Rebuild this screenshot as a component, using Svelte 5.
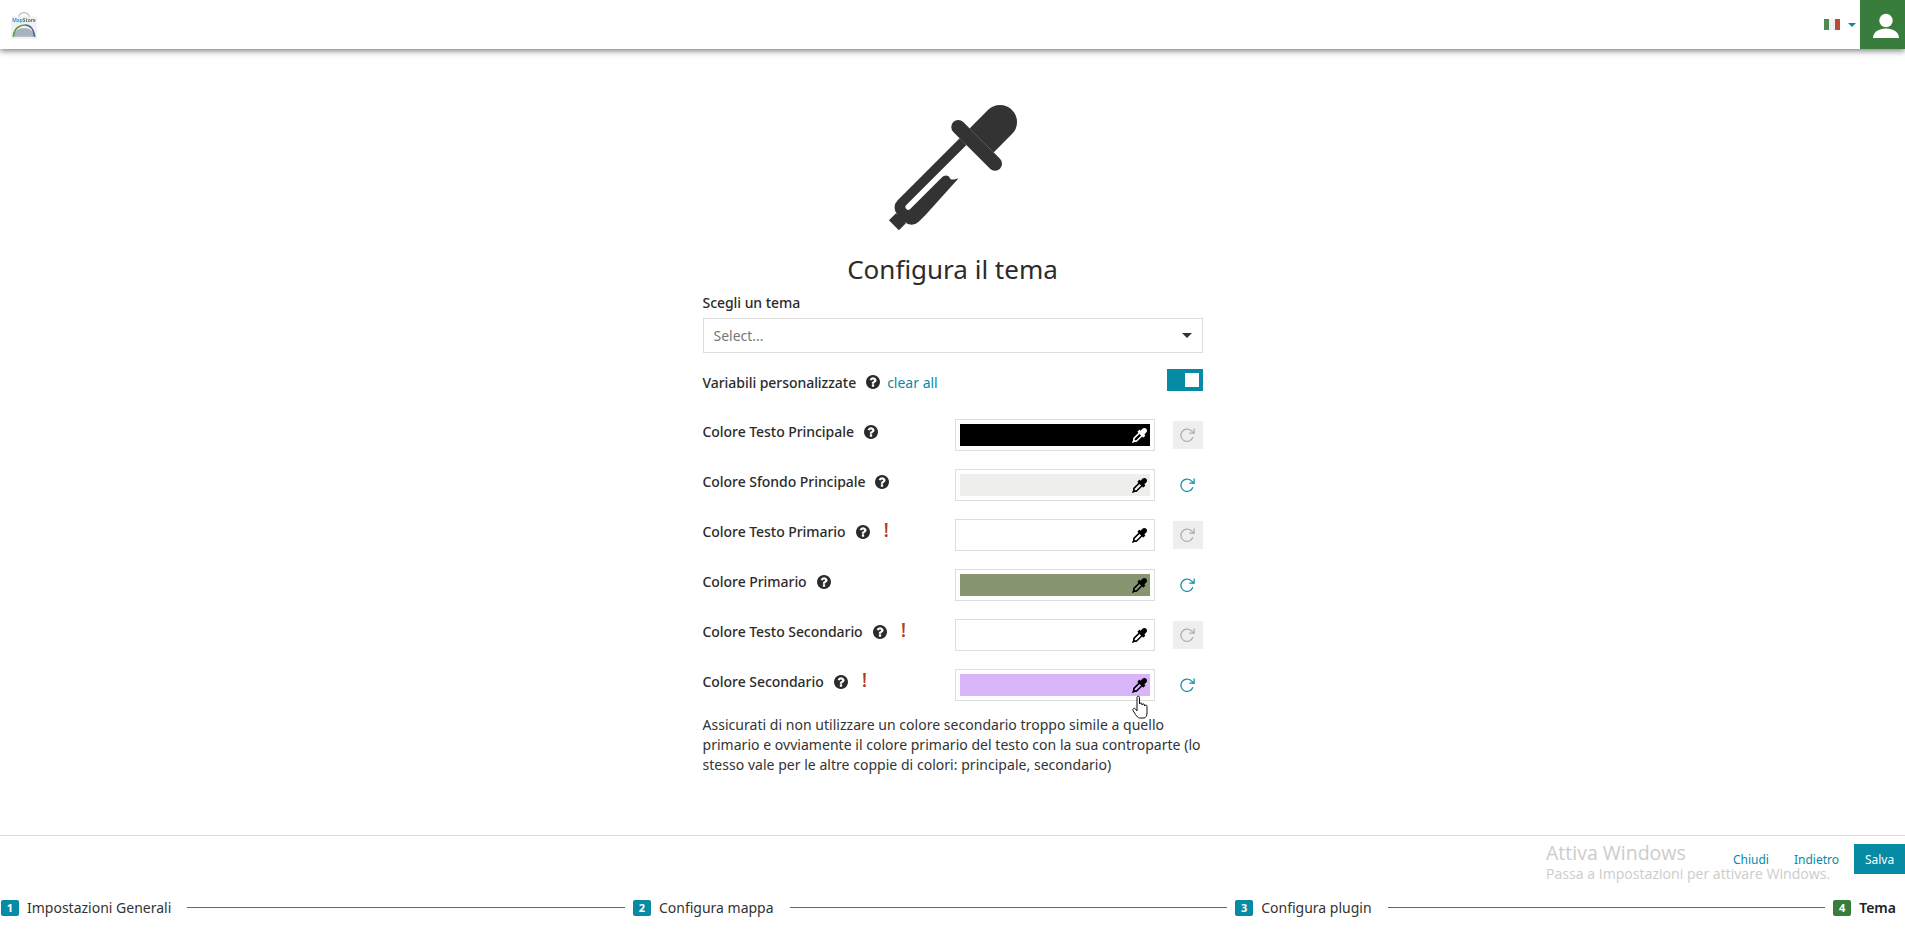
<script lang="ts">
	// Theme configuration step of the context creator wizard.
	const colorRows = [
		{ label: 'Colore Testo Principale', color: '#000000', changed: false, warn: false, light: true },
		{ label: 'Colore Sfondo Principale', color: '#eeeeec', changed: true, warn: false, light: false },
		{ label: 'Colore Testo Primario', color: '#ffffff', changed: false, warn: true, light: false },
		{ label: 'Colore Primario', color: '#879670', changed: true, warn: false, light: false },
		{ label: 'Colore Testo Secondario', color: '#ffffff', changed: false, warn: true, light: false },
		{ label: 'Colore Secondario', color: '#d8b4f8', changed: true, warn: true, light: false }
	];

	const steps = [
		{ n: 1, label: 'Impostazioni Generali', active: false },
		{ n: 2, label: 'Configura mappa', active: false },
		{ n: 3, label: 'Configura plugin', active: false },
		{ n: 4, label: 'Tema', active: true }
	];

	const helpPath = 'M1024 1376v-192q0-14-9-23t-23-9h-192q-14 0-23 9t-9 23v192q0 14 9 23t23 9h192q14 0 23-9t9-23zm256-672q0-88-55.5-163t-138.5-116-170-41q-243 0-371 213-15 24 8 42l132 100q7 6 19 6 16 0 25-12 53-68 86-92 34-24 86-24 48 0 85.5 26t37.5 59q0 38-20 61t-68 45q-63 28-115.5 86.5t-52.5 125.5v36q0 14 9 23t23 9h192q14 0 23-9t9-23q0-19 21.5-49.5t54.5-49.5q32-18 49-28.5t46-35 44.5-48 28-60.5 12.5-81zm384 192q0 209-103 385.5t-279.5 279.5-385.5 103-385.5-103-279.5-279.5-103-385.5 103-385.5 279.5-279.5 385.5-103 385.5 103 279.5 279.5 103 385.5z';
	const dropperPath = 'M1698 94q94 94 94 226.5t-94 225.5l-225 223 104 104q10 10 10 23t-10 23l-210 210q-10 10-23 10t-23-10l-105-105-603 603q-37 37-90 37h-203l-256 128-64-64 128-256v-203q0-53 37-90l603-603-105-105q-10-10-10-23t10-23l210-210q10-10 23-10t23 10l104 104 223-225q93-94 225.5-94t226.5 94zM512 1472l576-576-192-192-576 576v192h192z';
</script>

{#snippet help()}
	<svg class="help" viewBox="128 128 1536 1536" aria-hidden="true"><path d={helpPath} /></svg>
{/snippet}

<div class="page">
	<header class="topbar">
		<svg class="logo" viewBox="0 0 28 28" aria-hidden="true">
			<path d="M9 7 C9 1 19 1 19 7" fill="none" stroke="#aaa" stroke-width="1" />
			<rect x="2" y="6" width="24" height="21" fill="#f0f0f0" />
			<text x="14" y="11.5" text-anchor="middle" class="logo-text"><tspan fill="#3a9bd8">Map</tspan><tspan fill="#666">Store</tspan></text>
			<path d="M4 25 C5 14 23 14 24 25 Z" fill="#a9b2c0" />
			<path d="M4 25 C5 14 14 14 15 14" fill="none" stroke="#5c9c4a" stroke-width="1.6" />
			<path d="M15 14 C20 14 23 18 24 25" fill="none" stroke="#4d6a96" stroke-width="1.6" />
		</svg>
		<div class="topbar-right">
			<button class="lang" aria-label="Lingua">
				<span class="flag"><i class="fg"></i><i class="fw"></i><i class="fr"></i></span>
				<span class="lang-caret"></span>
			</button>
			<button class="user" aria-label="Utente">
				<svg viewBox="0 0 26 28" width="26" height="28" aria-hidden="true">
					<circle cx="13" cy="9.5" r="6.7" fill="#fff" />
					<path d="M0 27 C0 21 6 17.5 13 17.5 C20 17.5 26 21 26 27 Z" fill="#fff" />
				</svg>
			</button>
		</div>
	</header>

	<main class="content">
		<svg class="hero" viewBox="0 0 130 130" aria-hidden="true">
			<g transform="translate(124 6) rotate(45)" fill="#333">
				<path d="M-17 43 V16.7 A17 16.7 0 0 1 17 16.7 V43 Z" />
				<rect x="-33" y="43" width="66" height="14" rx="7" />
				<path d="M-17 57 H-7.5 V142 A2.7 2.7 0 0 0 -2 142 V98 C-2 92 2 91 4 92 C7 93 8 90 10.5 86 L13 135 V145 A10 10 0 0 1 3 155 H5 V165 H-9 V155 H-7 A10 10 0 0 1 -17 145 Z" />
			</g>
		</svg>
		<h1>Configura il tema</h1>

		<div class="form">
			<label class="field-label" for="theme-select">Scegli un tema</label>
			<div class="select" id="theme-select">
				<span>Select...</span>
				<span class="select-caret"></span>
			</div>

			<div class="custom-row">
				<span class="name">Variabili personalizzate</span>
				{@render help()}
				<a class="clear" href="#clear">clear all</a>
				<span class="toggle"><span class="knob"></span></span>
			</div>

			{#each colorRows as row}
				<div class="color-row">
					<div class="row-label">
						<span class="name">{row.label}</span>
						{@render help()}
						{#if row.warn}<span class="warn">!</span>{/if}
					</div>
					<div class="swatch-box">
						<div class="swatch" style="background: {row.color}">
							<svg class="picker" class:light={row.light} viewBox="0 0 1792 1792" aria-hidden="true"><path d={dropperPath} /></svg>
						</div>
					</div>
					<button class="reset" class:disabled={!row.changed} aria-label="Ripristina">
						<svg viewBox="0 0 24 24" aria-hidden="true">
							<polyline points="22 2 22 9 15 9" />
							<path d="M20.2 15a9 9 0 1 1-2.1-9.4L22 9" />
						</svg>
					</button>
				</div>
			{/each}

			<p class="note">Assicurati di non utilizzare un colore secondario troppo simile a quello primario e ovviamente il colore primario del testo con la sua controparte (lo stesso vale per le altre coppie di colori: principale, secondario)</p>
		</div>

		<svg class="cursor" viewBox="0 0 18 24" aria-hidden="true">
			<path d="M5 10 V2.5 C5 0.8 7.5 0.8 7.5 2.5 V9 C7.5 7.6 10 7.6 10 9 V10 C10 8.6 12.5 8.6 12.5 10 V11 C12.5 9.8 15 9.8 15 11.2 V18 C15 21 13.5 23 12 23 H7.5 C6 23 5 21.5 3.5 19.5 L1 15.5 C0 13.5 2.6 12.6 3.6 14 L5 15.8 Z" fill="#fff" stroke="#111" stroke-width="1" />
		</svg>
	</main>

	<footer class="footer">
		<div class="actions">
			<div class="watermark">
				<div class="wm-title">Attiva Windows</div>
				<div class="wm-sub">Passa a Impostazioni per attivare Windows.</div>
			</div>
			<button class="link-btn">Chiudi</button>
			<button class="link-btn last">Indietro</button>
			<button class="save-btn">Salva</button>
		</div>
		<nav class="stepper">
			{#each steps as step, i}
				{#if i > 0}<span class="step-line"></span>{/if}
				<div class="step" class:active={step.active}>
					<span class="badge">{step.n}</span>
					<span class="step-label">{step.label}</span>
				</div>
			{/each}
		</nav>
	</footer>
</div>

<style>
	:global(body) {
		margin: 0;
		background: #fff;
		color: #333;
		font-family: "Noto Sans", "Open Sans", sans-serif;
		font-size: 14px;
		overflow: hidden;
	}

	.page {
		display: flex;
		flex-direction: column;
		height: 932px;
	}

	button {
		font-family: inherit;
		border: none;
		background: none;
		padding: 0;
		cursor: pointer;
	}

	.topbar {
		display: flex;
		align-items: center;
		justify-content: space-between;
		height: 49px;
		flex-shrink: 0;
		box-shadow: 0 2px 6px rgba(0, 0, 0, 0.5);
		position: relative;
	}

	.logo {
		width: 30px;
		height: 30px;
		margin-left: 9px;
		filter: blur(0.5px);
	}

	.logo-text {
		font-size: 4.6px;
		font-weight: 700;
	}

	.topbar-right {
		display: flex;
		align-items: center;
		height: 100%;
	}

	.lang {
		display: flex;
		align-items: center;
		gap: 8px;
		margin-right: 4px;
	}

	.flag {
		display: flex;
		width: 16px;
		height: 11px;
	}

	.flag i {
		flex: 1;
	}

	.fg { background: #4f8a52; }
	.fw { background: #f0f0f0; }
	.fr { background: #b84a36; }

	.lang-caret {
		width: 0;
		height: 0;
		border-left: 4px solid transparent;
		border-right: 4px solid transparent;
		border-top: 4px solid #078aa3;
	}

	.user {
		display: flex;
		align-items: center;
		justify-content: center;
		width: 45px;
		height: 49px;
		padding-left: 7px;
		box-sizing: border-box;
		background: #397d3c;
	}

	.content {
		flex: 1;
		display: flex;
		flex-direction: column;
		align-items: center;
		position: relative;
	}

	.hero {
		width: 130px;
		height: 130px;
		margin-top: 55px;
	}

	h1 {
		font-size: 26px;
		font-weight: 400;
		line-height: 34px;
		margin: 18px 0 0;
		color: #2b2b2b;
	}

	.form {
		width: 500px;
		margin-top: 7px;
	}

	.field-label {
		display: block;
		font-weight: 500;
		line-height: 20px;
		margin-bottom: 5px;
		color: #2b2b2b;
		letter-spacing: -0.05px;
	}

	.select {
		display: flex;
		align-items: center;
		justify-content: space-between;
		height: 35px;
		box-sizing: border-box;
		border: 1px solid #ddd;
		padding: 0 10px;
		color: #777;
	}

	.select-caret {
		border-left: 5px solid transparent;
		border-right: 5px solid transparent;
		border-top: 5px solid #333;
	}

	.custom-row {
		display: flex;
		align-items: center;
		height: 22px;
		margin: 16px 0 28px;
		position: relative;
	}

	.custom-row .name,
	.custom-row .help,
	.clear {
		position: relative;
		top: 2px;
	}

	.name {
		font-weight: 500;
		color: #2b2b2b;
		white-space: nowrap;
		letter-spacing: -0.05px;
	}

	.help {
		width: 14px;
		height: 14px;
		margin-left: 10px;
		fill: #2b2b2b;
		flex-shrink: 0;
	}

	.clear {
		margin-left: 7px;
		color: #078aa3;
		text-decoration: none;
	}

	.toggle {
		margin-left: auto;
		display: flex;
		align-items: center;
		justify-content: flex-end;
		width: 36px;
		height: 22px;
		padding-right: 4px;
		box-sizing: border-box;
		background: #078aa3;
	}

	.knob {
		width: 14px;
		height: 14px;
		background: #fff;
	}

	.color-row {
		display: flex;
		align-items: center;
		height: 32px;
		margin-bottom: 18px;
	}

	.row-label {
		display: flex;
		align-items: center;
		width: 252px;
		margin-top: -7px;
	}

	.warn {
		margin-left: 14px;
		color: #b23a26;
		font-size: 20px;
		font-weight: 500;
		line-height: 20px;
		margin-top: -3px;
	}

	.swatch-box {
		width: 200px;
		height: 32px;
		box-sizing: border-box;
		border: 1px solid #ddd;
		padding: 4px;
	}

	.swatch {
		display: flex;
		align-items: center;
		justify-content: flex-end;
		height: 100%;
		padding-right: 3px;
		box-sizing: border-box;
	}

	.picker {
		width: 15px;
		height: 15px;
		fill: #000;
	}

	.picker.light {
		fill: #fff;
	}

	.reset {
		display: flex;
		align-items: center;
		justify-content: center;
		width: 30px;
		height: 28px;
		margin-left: 18px;
		color: #078aa3;
	}

	.reset.disabled {
		background: #eeeeee;
		color: #aaa;
	}

	.reset svg {
		width: 16.5px;
		height: 16.5px;
		fill: none;
		stroke: currentColor;
		stroke-width: 1.7;
	}

	.note {
		margin: -4px 0 0;
		line-height: 20px;
		color: #333;
		letter-spacing: 0.03px;
	}

	/* pointer caught in the screenshot, lies over the last swatch */
	.cursor {
		position: absolute;
		left: 1132px;
		top: 646px;
		width: 18px;
		height: 24px;
	}

	.footer {
		flex-shrink: 0;
		height: 97px;
		box-sizing: border-box;
		border-top: 1px solid #ddd;
		display: flex;
		flex-direction: column;
	}

	.actions {
		display: flex;
		justify-content: flex-end;
		align-items: center;
		height: 30px;
		margin-top: 8px;
		position: relative;
	}

	.watermark {
		position: absolute;
		left: 1546px;
		top: -3px;
		color: #cccccc;
		white-space: nowrap;
		font-family: "Open Sans", sans-serif;
	}

	.wm-title {
		font-size: 19.5px;
		line-height: 24px;
	}

	.wm-sub {
		font-size: 14.1px;
		line-height: 18px;
	}

	.link-btn {
		color: #078aa3;
		font-size: 12px;
		margin-right: 25px;
	}

	.link-btn.last {
		margin-right: 15px;
	}

	.save-btn {
		width: 51px;
		height: 30px;
		background: #078aa3;
		color: #fff;
		font-size: 12px;
	}

	.stepper {
		display: flex;
		align-items: center;
		margin-top: 24px;
		padding: 0 9px 0 1px;
	}

	.step {
		display: flex;
		align-items: center;
		gap: 8px;
	}

	.badge {
		display: flex;
		align-items: center;
		justify-content: center;
		min-width: 18px;
		height: 16px;
		border-radius: 2px;
		background: #078aa3;
		color: #fff;
		font-size: 11px;
		font-weight: 700;
	}

	.step.active .badge {
		background: #397d3c;
	}

	.step.active .step-label {
		font-weight: 600;
		color: #222;
	}

	.step-line {
		flex: 1;
		height: 1px;
		background: #666;
		margin: 0 8px 0 16px;
	}
</style>
